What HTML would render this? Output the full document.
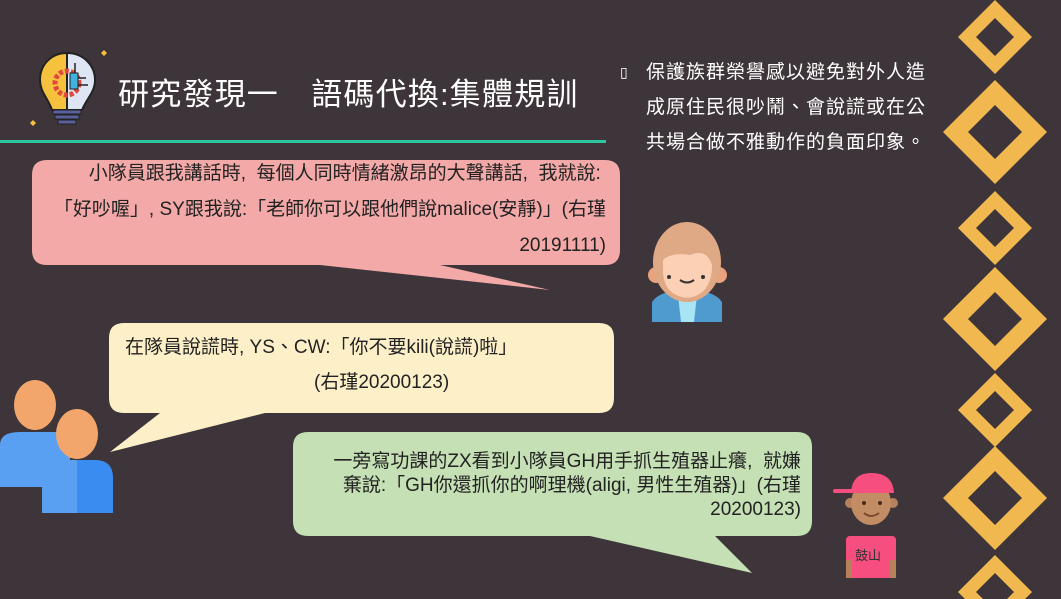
<!DOCTYPE html>
<html><head><meta charset="utf-8"><style>
html,body{margin:0;width:1061px;height:599px;overflow:hidden}
body{background:#3d3539;font-family:"Liberation Sans","Noto Sans CJK TC",sans-serif;position:relative}
.a{position:absolute}
.t{color:#222;font-size:19px;white-space:nowrap}
</style></head><body>
<svg class="a" style="left:0;top:0;display:block" width="1061" height="599">
<g fill="#f0b84f" fill-rule="evenodd">
<path d="M995 0 L1032 37 L995 74 L958 37Z M995 18 L1014 37 L995 56 L976 37Z"/>
<path d="M995 80 L1047 132 L995 184 L943 132Z M995 105 L1022 132 L995 159 L968 132Z"/>
<path d="M995 191 L1032 228 L995 265 L958 228Z M995 209 L1014 228 L995 247 L976 228Z"/>
<path d="M995 267 L1047 319 L995 371 L943 319Z M995 292 L1022 319 L995 346 L968 319Z"/>
<path d="M995 373 L1032 410 L995 447 L958 410Z M995 391 L1014 410 L995 429 L976 410Z"/>
<path d="M995 446 L1047 498 L995 550 L943 498Z M995 471 L1022 498 L995 525 L968 498Z"/>
<path d="M995 555 L1032 592 L995 629 L958 592Z M995 573 L1014 592 L995 611 L976 592Z"/>
</g>
<rect x="0" y="140" width="606" height="3" fill="#2ec4a0"/>
<path d="M67 53 C50 53 40 66 40 80 C40 92 48 98 52 110 L67 110Z" fill="#f6c23e" stroke="#222" stroke-width="2"/>
<path d="M67 53 C84 53 95 66 95 80 C95 92 87 98 82 110 L67 110Z" fill="#dfe6f3" stroke="#222" stroke-width="2"/>
<circle cx="67" cy="83" r="12" fill="none" stroke="#e0483e" stroke-width="5" stroke-dasharray="4 2"/>
<rect x="70" y="73" width="8" height="16" fill="#3fb3e0" stroke="#222"/>
<path d="M78 78 H86 M78 85 H88 M75 73 V63" stroke="#222" stroke-width="1.5"/>
<rect x="53" y="110" width="28" height="4" fill="#5a5f9e" stroke="#222"/>
<rect x="55" y="115" width="24" height="4" fill="#5a5f9e" stroke="#222"/>
<rect x="58" y="120" width="18" height="4" fill="#5a5f9e" stroke="#222"/>
<path d="M104 50 l3 3 -3 3 -3 -3Z M33 120 l3 3 -3 3 -3 -3Z" fill="#f6c23e"/>
<path d="M47 160 H605 Q620 160 620 175 V250 Q620 265 605 265 H440 L550 290 L320 265 H47 Q32 265 32 250 V175 Q32 160 47 160Z" fill="#f2a9a8"/>
<path d="M124 323 H599 Q614 323 614 338 V398 Q614 413 599 413 H265 L110 452 L160 413 H124 Q109 413 109 398 V338 Q109 323 124 323Z" fill="#fdf0c8"/>
<path d="M308 432 H797 Q812 432 812 447 V521 Q812 536 797 536 H715 L752 573 L590 536 H308 Q293 536 293 521 V447 Q293 432 308 432Z" fill="#c5e0b4"/>
<circle cx="656" cy="275" r="8" fill="#e9a27d"/><circle cx="719" cy="275" r="8" fill="#e9a27d"/>
<path d="M652 322 V302 Q660 290 687 290 Q714 290 722 302 V322Z" fill="#4f9bd0"/>
<path d="M678 295 H697 L694 322 H681Z" fill="#a9e4f5"/>
<ellipse cx="687" cy="262" rx="34" ry="40" fill="#e0a986"/>
<path d="M663 260 Q672 252 690 255 Q707 248 712 265 Q712 295 687 298 Q663 295 663 270Z" fill="#fbd0b5"/>
<circle cx="669" cy="277" r="2" fill="#333"/><circle cx="703" cy="277" r="2" fill="#333"/>
<path d="M680 280 Q687 285 694 280" stroke="#333" stroke-width="2" fill="none"/>
<ellipse cx="35" cy="405" rx="21" ry="25" fill="#f2a66b"/>
<path d="M0 515 V445 Q0 432 20 432 H55 Q70 432 70 450 V487 H0Z" fill="#5aa0f2"/>
<ellipse cx="77" cy="434" rx="21" ry="25" fill="#f2a66b"/>
<path d="M42 513 V470 Q42 460 60 460 H95 Q113 460 113 478 V513Z" fill="#3b8cf0"/>
<path d="M77 460 H60 Q42 460 42 470 V513 H77Z" fill="#5aa0f2"/>
<rect x="846" y="536" width="50" height="42" rx="4" fill="#f54e7f"/>
<rect x="846" y="560" width="6" height="18" fill="#b5805a"/><rect x="890" y="560" width="6" height="18" fill="#b5805a"/>
<circle cx="850" cy="503" r="5" fill="#b5805a"/><circle cx="893" cy="503" r="5" fill="#b5805a"/>
<ellipse cx="871" cy="503" rx="20" ry="22" fill="#c28d64"/>
<path d="M851 493 Q852 473 871 473 Q893 473 894 493Z" fill="#f54e7f"/>
<rect x="833" y="489" width="30" height="4" rx="2" fill="#f54e7f"/>
<circle cx="864" cy="503" r="2" fill="#4a2b1a"/><circle cx="880" cy="503" r="2" fill="#4a2b1a"/>
<path d="M864 513 Q871 519 879 513" stroke="#7a4a2a" stroke-width="2" fill="none"/>
</svg>
<div class="a" style="left:118px;top:69px;color:#fff;font-size:31px;letter-spacing:1.2px;white-space:nowrap">研究發現一　語碼代換:集體規訓</div>
<div class="a" style="left:620px;top:55px;color:#fff;font-size:19px;line-height:35px;letter-spacing:1px;white-space:nowrap">
<span style="position:absolute;left:0;top:0;font-size:14px">▯</span>
<div style="margin-left:26px">保護族群榮譽感以避免對外人造<br>成原住民很吵鬧、會說謊或在公<br>共場合做不雅動作的負面印象。</div></div>
<div class="a t" style="right:455px;top:156px;text-align:right;line-height:36px">小隊員跟我講話時,&nbsp; 每個人同時情緒激昂的大聲講話,&nbsp; 我就說:&nbsp;<br>「好吵喔」, SY跟我說:「老師你可以跟他們說malice(安靜)」(右瑾<br>20191111)</div>
<div class="a t" style="left:125px;top:330px;line-height:35px">在隊員說謊時, YS、CW:「你不要kili(說謊)啦」</div>
<div class="a t" style="left:314px;top:365px;line-height:35px">(右瑾20200123)</div>
<div class="a t" style="right:260px;top:450px;text-align:right;line-height:24px">一旁寫功課的ZX看到小隊員GH用手抓生殖器止癢,&nbsp; 就嫌<br>棄說:「GH你還抓你的啊理機(aligi, 男性生殖器)」(右瑾<br>20200123)</div>
<div class="a" style="left:855px;top:545px;font-size:13px;color:#333">鼓山</div>
</body></html>
